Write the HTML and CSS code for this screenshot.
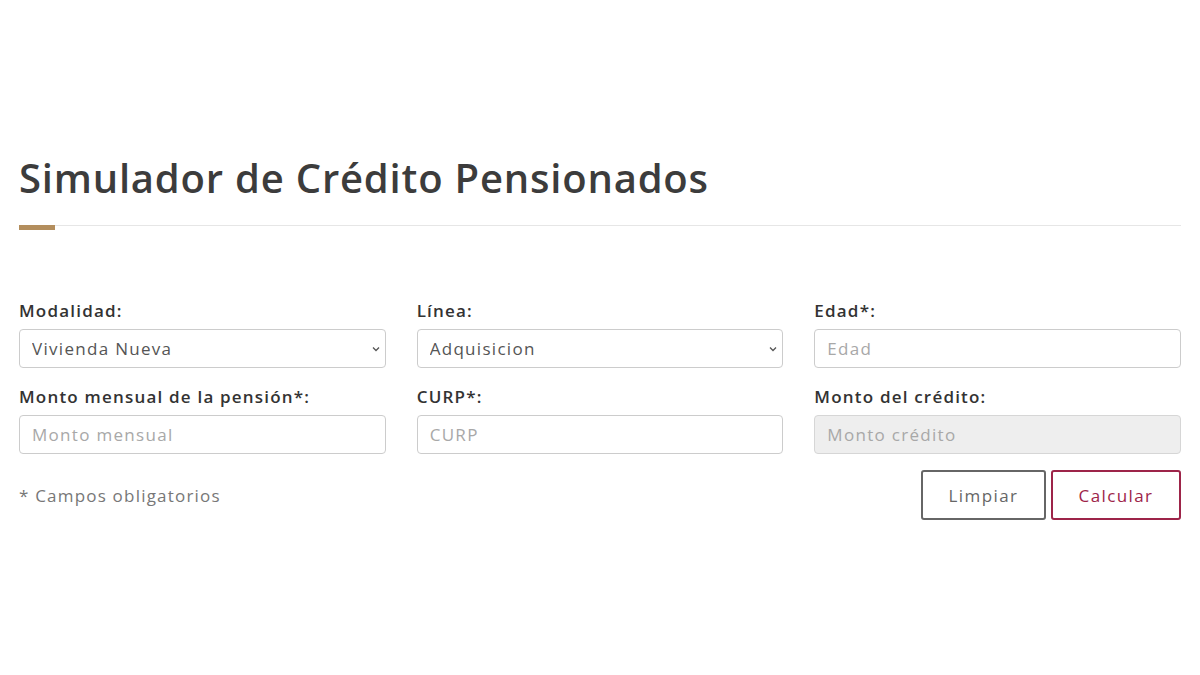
FILE: index.html
```html
<!DOCTYPE html>
<html lang="es">
<head>
    <meta charset="UTF-8">
    <meta name="viewport" content="width=device-width, initial-scale=1.0">
    <title>Simulador de Crédito Pensionados</title>
    <link rel="stylesheet" href="styles.css">
</head>
<body>
    <div class="container">
        <h2 class="title">Simulador de Crédito Pensionados</h2>
        <div class="divider"><span class="divider-accent"></span></div>

        <form class="sim-form">
            <div class="grid">
                <div class="field">
                    <label for="modalidad">Modalidad:</label>
                    <div class="select-wrap">
                        <select id="modalidad" class="control">
                            <option>Vivienda Nueva</option>
                            <option>Vivienda Usada</option>
                        </select>
                        <svg class="chevron" width="8" height="6" viewBox="0 0 8 6"><path d="M1 1.5 L4 4.5 L7 1.5" fill="none" stroke="#555" stroke-width="1.3"/></svg>
                    </div>
                </div>
                <div class="field">
                    <label for="linea">Línea:</label>
                    <div class="select-wrap">
                        <select id="linea" class="control">
                            <option>Adquisicion</option>
                        </select>
                        <svg class="chevron" width="8" height="6" viewBox="0 0 8 6"><path d="M1 1.5 L4 4.5 L7 1.5" fill="none" stroke="#555" stroke-width="1.3"/></svg>
                    </div>
                </div>
                <div class="field">
                    <label for="edad">Edad*:</label>
                    <input id="edad" class="control" type="text" placeholder="Edad">
                </div>
                <div class="field">
                    <label for="monto">Monto mensual de la pensión*:</label>
                    <input id="monto" class="control" type="text" placeholder="Monto mensual">
                </div>
                <div class="field">
                    <label for="curp">CURP*:</label>
                    <input id="curp" class="control" type="text" placeholder="CURP">
                </div>
                <div class="field">
                    <label for="credito">Monto del crédito:</label>
                    <input id="credito" class="control" type="text" placeholder="Monto crédito" disabled>
                </div>
            </div>

            <div class="form-footer">
                <span class="note">* Campos obligatorios</span>
                <div class="actions">
                    <button type="reset" class="btn btn-clear">Limpiar</button>
                    <button type="button" class="btn btn-calc">Calcular</button>
                </div>
            </div>
        </form>
    </div>
</body>
</html>
```

FILE: styles.css
```css
body {
    margin: 0;
    font-family: "Open Sans", "Liberation Sans", sans-serif;
    background-color: #fff;
    color: #404041;
}
.container {
    padding: 150px 19px 0 19px;
}
.title {
    margin: 0;
    font-size: 40px;
    font-weight: 600;
    line-height: 56px;
    letter-spacing: 0.8px;
    color: #3c3c3c;
}
.divider {
    margin-top: 19px;
    height: 1px;
    background-color: #e6e6e6;
    position: relative;
}
.divider-accent {
    position: absolute;
    left: 0;
    top: 0;
    width: 36px;
    height: 5px;
    background-color: #b38e5d;
}
.sim-form {
    margin-top: 75px;
}
.grid {
    display: grid;
    grid-template-columns: 1fr 1fr 1fr;
    column-gap: 31px;
    row-gap: 19px;
}
.field label {
    display: block;
    font-size: 17px;
    font-weight: 600;
    line-height: 20px;
    letter-spacing: 1.2px;
    margin-bottom: 8px;
    color: #333;
}
.select-wrap {
    position: relative;
}
.control {
    box-sizing: border-box;
    width: 100%;
    height: 39px;
    padding: 0 12px;
    font-family: inherit;
    font-size: 17px;
    letter-spacing: 1.3px;
    color: #555;
    background-color: #fff;
    border: 1px solid #ccc;
    border-radius: 4px;
    appearance: none;
    -webkit-appearance: none;
    outline: none;
}
.control::placeholder {
    color: #a8a8a8;
}
.control:disabled {
    background-color: #eee;
    border-color: #d6d6d6;
}
.chevron {
    position: absolute;
    right: 6px;
    top: 17px;
}
.form-footer {
    display: flex;
    justify-content: space-between;
    align-items: center;
    margin-top: 16px;
}
.note {
    font-size: 17px;
    letter-spacing: 1.2px;
    color: #777;
}
.actions {
    display: flex;
    gap: 5px;
}
.btn {
    height: 50px;
    padding: 0;
    font-family: inherit;
    font-size: 17px;
    letter-spacing: 1.4px;
    background-color: #fff;
    border-radius: 3px;
    cursor: pointer;
}
.btn-clear {
    width: 125px;
    color: #666;
    border: 2px solid #666;
}
.btn-calc {
    width: 130px;
    color: #9d2449;
    border: 2px solid #9d2449;
}
```
